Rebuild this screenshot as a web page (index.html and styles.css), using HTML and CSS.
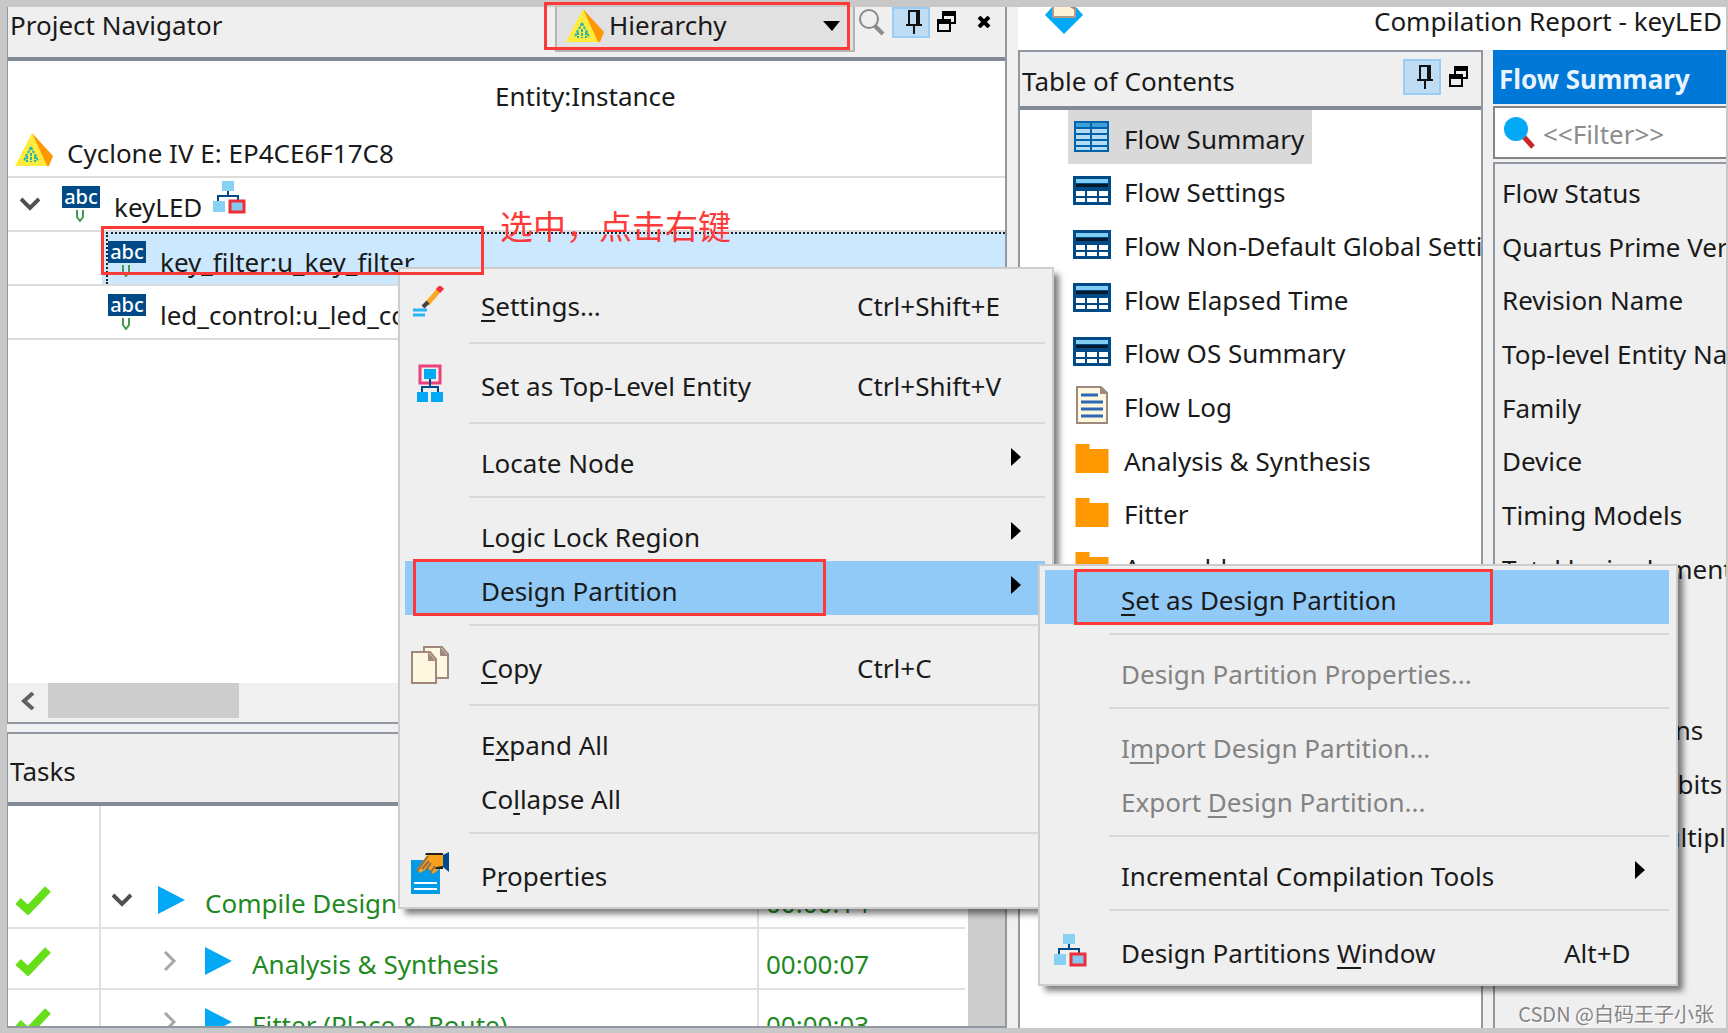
FILE: index.html
```html
<!DOCTYPE html>
<html lang="en">
<head>
<meta charset="utf-8">
<title>Quartus Prime - keyLED</title>
<link rel="stylesheet" href="styles.css">
</head>
<body>
<svg class="sprite" aria-hidden="true">
  <symbol id="pyramid" viewBox="0 0 38 34"><path d="M17 0 0 33h33z" fill="#ffeb3b"/><path d="M17 0 38 23 34 33h-2z" fill="#ff9800"/><path d="M16 14l-3 6M16 14l3 6M12 21l-3 7M20 21l3 7M16 20v9M12 23v6M20 23v6" stroke="#26b5b0" stroke-width="2" stroke-dasharray="3 1" fill="none"/></symbol>
  <symbol id="abc" viewBox="0 0 38 36"><path d="M0 0h38v22H0z" fill="#004a87"/><text x="19" y="18" text-anchor="middle" font-family="Noto Sans, sans-serif" font-size="20" font-weight="500" fill="#fff">abc</text><path d="M15 24v7l3 4 3-4v-7" stroke="#469a50" stroke-width="2" fill="none"/></symbol>
  <symbol id="hier" viewBox="0 0 33 33"><path d="M15 9v6M5 21v-6h20v5" stroke="#004a87" stroke-width="2" fill="none"/><path d="M9 0h12v10H9zM0 20h12v11H0z" fill="#87d1f3"/><path d="M17 20h14v11H17z" fill="#87c7ee" stroke="#ee2e38" stroke-width="3"/></symbol>
  <symbol id="down" viewBox="0 0 20 14"><path d="M1 2l9 9 9-9" stroke="#505050" stroke-width="4" fill="none"/></symbol>
  <symbol id="right" viewBox="0 0 14 20"><path d="M2 1l9 9-9 9" stroke="#a8a8a8" stroke-width="3" fill="none"/></symbol>
  <symbol id="pin" viewBox="0 0 16 24"><path d="M3 15V1h10v14M0 15h16M8 15v9" stroke="#111" stroke-width="2" fill="none"/><path d="M10 1h3v14h-3z" fill="#111"/></symbol>
  <symbol id="restore" viewBox="0 0 20 22"><path d="M6 8V2h12v10h-4" stroke="#000" stroke-width="2" fill="none"/><path d="M5 0h14v5H5zM0 8h14v5H0z"/><path d="M1 10h12v10H1z" stroke="#000" stroke-width="2" fill="none"/></symbol>
  <symbol id="grid" viewBox="0 0 36 32"><path d="M1 1h33v29H1z" fill="#b5dcf5"/><path d="M1 1h33v6H1z" fill="#3fa0dc"/><path d="M1 1h33v29H1zM17 1v29M1 7h33M1 13h33M1 19h33M1 25h33" stroke="#0062a8" stroke-width="2" fill="none"/></symbol>
  <symbol id="table" viewBox="0 0 38 29"><path d="M0 0h38v29H0z" fill="#004a87"/><path d="M3 3h32v4H3z" fill="#7fcdf0"/><path d="M3 8h32v3H3z" fill="#081a2a"/><path d="M3 15h9v5H3zM14 15h10v5H14zM26 15h9v5h-9zM3 22h9v4H3zM14 22h10v4H14zM26 22h9v4h-9z" fill="#fff"/></symbol>
  <symbol id="log" viewBox="0 0 32 38"><path d="M1 1h24l6 6v30H1z" fill="#fff8e1" stroke="#a1887f" stroke-width="2"/><path d="M24 1v7h7z" fill="#a1887f"/><path d="M5 9h17M5 16h22M5 23h22M5 30h22" stroke="#2f66b5" stroke-width="3"/></symbol>
  <symbol id="folder" viewBox="0 0 33 29"><path d="M0 0h14v5h19v24H0z" fill="#ff9800"/></symbol>
  <symbol id="check" viewBox="0 0 36 30"><path d="M3 16l10 9L33 4" stroke="#66df1b" stroke-width="8" fill="none"/></symbol>
  <symbol id="play" viewBox="0 0 27 28"><path d="M0 0l27 14L0 28z" fill="#03a9f4"/></symbol>
  <symbol id="arrow" viewBox="0 0 10 18"><path d="M0 0l10 9-10 9z"/></symbol>
</svg>

<div class="app">
  <div class="left">
    <section class="panel">
      <header class="bar nav-bar">
        <h2 class="label">Project Navigator</h2>
        <div class="combo">
          <svg class="combo-icon" width="38" height="34"><use href="#pyramid"/></svg>
          <select aria-label="Navigator view"><option>Hierarchy</option></select>
          <svg class="combo-arrow" width="17" height="10" viewBox="0 0 17 10"><path d="M0 0h17L9 10z"/></svg>
        </div>
        <div class="tools">
          <button class="tool" aria-label="Search"><svg width="26" height="27" viewBox="0 0 26 27" fill="none" stroke="#8a8a8a"><circle cx="10" cy="10" r="9" stroke-width="2"/><path d="M16 17l8 8" stroke-width="4"/></svg></button>
          <button class="tool pinned" aria-label="Pin"><svg width="16" height="24"><use href="#pin"/></svg></button>
          <button class="tool" aria-label="Restore"><svg width="20" height="22"><use href="#restore"/></svg></button>
          <button class="tool" aria-label="Close"><svg width="14" height="12" viewBox="0 0 14 12"><path d="M2 1l10 10M12 1L2 11" stroke="#000" stroke-width="4"/></svg></button>
        </div>
      </header>
      <div class="tree-head"><span class="label">Entity:Instance</span></div>
      <ul class="tree">
        <li class="tree-row device"><svg width="38" height="34"><use href="#pyramid"/></svg><span class="label">Cyclone IV E: EP4CE6F17C8</span></li>
        <li class="tree-row top"><svg class="twist" width="20" height="14"><use href="#down"/></svg><svg width="38" height="36"><use href="#abc"/></svg><span class="label">keyLED</span><svg class="badge" width="33" height="33"><use href="#hier"/></svg></li>
        <li class="tree-row child selected"><div class="cell"><svg width="38" height="36"><use href="#abc"/></svg><span class="label">key_filter:u_key_filter</span></div></li>
        <li class="tree-row child"><div class="cell"><svg width="38" height="36"><use href="#abc"/></svg><span class="label">led_control:u_led_control</span></div></li>
      </ul>
      <div class="hscroll"><svg width="15" height="18" viewBox="0 0 15 18"><path d="M13 1L4 9l9 8" stroke="#606060" stroke-width="4" fill="none"/></svg><div class="thumb"></div></div>
    </section>

    <section class="panel">
      <header class="bar tasks-bar"><h2 class="label">Tasks</h2></header>
      <div class="tasks-body">
        <table class="tasks">
          <colgroup><col class="c-state"><col><col class="c-time"></colgroup>
          <tr class="blank"><td></td><td></td><td></td></tr>
          <tr><td><svg width="36" height="30"><use href="#check"/></svg></td><td><div class="task"><svg class="open" width="20" height="14"><use href="#down"/></svg><svg width="27" height="28"><use href="#play"/></svg><span class="label">Compile Design</span></div></td><td><div class="task"><span class="label">00:00:14</span></div></td></tr>
          <tr><td><svg width="36" height="30"><use href="#check"/></svg></td><td><div class="task sub"><svg width="14" height="20"><use href="#right"/></svg><svg width="27" height="28"><use href="#play"/></svg><span class="label">Analysis &amp; Synthesis</span></div></td><td><div class="task"><span class="label">00:00:07</span></div></td></tr>
          <tr><td><svg width="36" height="30"><use href="#check"/></svg></td><td><div class="task sub"><svg width="14" height="20"><use href="#right"/></svg><svg width="27" height="28"><use href="#play"/></svg><span class="label">Fitter (Place &amp; Route)</span></div></td><td><div class="task"><span class="label">00:00:03</span></div></td></tr>
        </table>
        <div class="vscroll"></div>
      </div>
    </section>
  </div>

  <div class="right">
    <header class="title">
      <svg width="38" height="28" viewBox="0 0 38 28"><path d="M8 0h22l8 9-19 19L0 9z" fill="#03a9f4"/><path d="M8 0h22v11H8z" fill="#fff3d6" stroke="#b09a8c" stroke-width="2"/><path d="M23 0h7v4z" fill="#a1887f"/></svg>
      <h1>Compilation Report - keyLED</h1>
    </header>
    <div class="report">
      <section class="toc">
        <header class="bar toc-bar">
          <h2>Table of Contents</h2>
          <div class="tools">
            <button class="tool pinned" aria-label="Pin"><svg width="16" height="24"><use href="#pin"/></svg></button>
            <button class="tool" aria-label="Restore"><svg width="20" height="22"><use href="#restore"/></svg></button>
          </div>
        </header>
        <ul class="toc-list">
          <li><a href="#" class="current"><svg width="38" height="32"><use href="#grid"/></svg><span>Flow Summary</span></a></li>
          <li><a href="#"><svg width="38" height="29"><use href="#table"/></svg><span>Flow Settings</span></a></li>
          <li><a href="#"><svg width="38" height="29"><use href="#table"/></svg><span>Flow Non-Default Global Settings</span></a></li>
          <li><a href="#"><svg width="38" height="29"><use href="#table"/></svg><span>Flow Elapsed Time</span></a></li>
          <li><a href="#"><svg width="38" height="29"><use href="#table"/></svg><span>Flow OS Summary</span></a></li>
          <li><a href="#"><svg width="38" height="38"><use href="#log"/></svg><span>Flow Log</span></a></li>
          <li><a href="#"><svg width="38" height="29"><use href="#folder"/></svg><span>Analysis &amp; Synthesis</span></a></li>
          <li><a href="#"><svg width="38" height="29"><use href="#folder"/></svg><span>Fitter</span></a></li>
          <li><a href="#"><svg width="38" height="29"><use href="#folder"/></svg><span>Assembler</span></a></li>
        </ul>
      </section>
      <section class="summary">
        <h2 class="summary-title">Flow Summary</h2>
        <label class="filter">
          <svg width="31" height="32" viewBox="0 0 31 32"><path d="M20 20l9 10" stroke="#c62828" stroke-width="5"/><circle cx="12" cy="12" r="12" fill="#03a9f4"/></svg>
          <input type="text" placeholder="&lt;&lt;Filter&gt;&gt;" aria-label="Filter">
        </label>
        <div class="summary-body">
          <table class="facts">
            <tr><td>Flow Status</td></tr>
            <tr><td>Quartus Prime Version</td></tr>
            <tr><td>Revision Name</td></tr>
            <tr><td>Top-level Entity Name</td></tr>
            <tr><td>Family</td></tr>
            <tr><td>Device</td></tr>
            <tr><td>Timing Models</td></tr>
            <tr><td>Total logic elements</td></tr>
            <tr><td>Total registers</td></tr>
            <tr><td>Total pins</td></tr>
            <tr><td>Total virtual pins</td></tr>
            <tr><td>Total memory bits</td></tr>
            <tr><td>Embedded Multiplier 9-bit elements</td></tr>
            <tr><td>Total PLLs</td></tr>
          </table>
        </div>
      </section>
    </div>
  </div>
</div>

<div class="menu context" role="menu">
  <button class="item tall" role="menuitem"><span class="icon"><svg width="34" height="34" viewBox="0 0 34 34"><path d="M14 18L26 4" stroke="#f9a825" stroke-width="5"/><path d="M25 5l4-4" stroke="#f03040" stroke-width="6"/><path d="M10 21l5-5" stroke="#424242" stroke-width="4"/><path d="M0 24h14M0 29h12" stroke="#29b6f6" stroke-width="3"/></svg></span><span class="label"><u>S</u>ettings...</span><kbd>Ctrl+Shift+E</kbd></button>
  <hr>
  <button class="item tall" role="menuitem"><span class="icon"><svg width="28" height="38" viewBox="0 0 28 38"><path d="M4 2h20v17H4z" fill="none" stroke="#ec407a" stroke-width="3"/><path d="M14 12v12M6 30v-7h16v7" stroke="#004a87" stroke-width="2" fill="none"/><path d="M8 5h12v10H8zM1 28h11v10H1zM15 28h12v10H15z" fill="#03a9f4"/></svg></span><span class="label">Set as Top-Level Entity</span><kbd>Ctrl+Shift+V</kbd></button>
  <hr>
  <button class="item" role="menuitem"><span class="icon"></span><span class="label">Locate Node</span><svg class="more" width="10" height="18"><use href="#arrow"/></svg></button>
  <hr>
  <button class="item" role="menuitem"><span class="icon"></span><span class="label">Logic Lock Region</span><svg class="more" width="10" height="18"><use href="#arrow"/></svg></button>
  <button class="item active" role="menuitem"><span class="icon"></span><span class="label">Design Partition</span><svg class="more" width="10" height="18"><use href="#arrow"/></svg></button>
  <hr>
  <button class="item tall" role="menuitem"><span class="icon"><svg width="38" height="38" viewBox="0 0 38 38"><path d="M13 1h18l6 7v24H13z" fill="#fff8e1" stroke="#a1887f" stroke-width="2"/><path d="M29 1v9h8z" fill="#a1887f"/><path d="M1 6h18l6 7v24H1z" fill="#fff8e1" stroke="#a1887f" stroke-width="2"/><path d="M17 6v9h8z" fill="#a1887f"/></svg></span><span class="label"><u>C</u>opy</span><kbd>Ctrl+C</kbd></button>
  <hr>
  <button class="item" role="menuitem"><span class="icon"></span><span class="label">E<u>x</u>pand All</span></button>
  <button class="item" role="menuitem"><span class="icon"></span><span class="label">Co<u>l</u>lapse All</span></button>
  <hr>
  <button class="item tall" role="menuitem"><span class="icon"><svg width="38" height="42" viewBox="0 0 38 42"><path d="M0 8h29v34H0z" fill="#039be5"/><path d="M3 31h23M3 37h23" stroke="#fff" stroke-width="2"/><path d="M6 17L17 2h15v12l-10 8-5-6-8 5z" fill="#f9a11b"/><path d="M6 19L17 4M11 17l7-8M15 18l5-7M19 21l5-7" stroke="#8d6e4f" stroke-width="2" fill="none"/><path d="M15 1h17v2H14zM25 15l7-1v3h-8z" fill="#222"/><path d="M38 0v20l-6-5V3z" fill="#004a87"/></svg></span><span class="label">P<u>r</u>operties</span></button>
</div>

<div class="menu submenu" role="menu">
  <button class="item active" role="menuitem"><span class="icon"></span><span class="label"><u>S</u>et as Design Partition</span></button>
  <hr>
  <button class="item" role="menuitem" disabled><span class="icon"></span><span class="label">Design Partition Properties...</span></button>
  <hr>
  <button class="item" role="menuitem" disabled><span class="icon"></span><span class="label">I<u>m</u>port Design Partition...</span></button>
  <button class="item" role="menuitem" disabled><span class="icon"></span><span class="label">Export <u>D</u>esign Partition...</span></button>
  <hr>
  <button class="item" role="menuitem"><span class="icon"></span><span class="label">Incremental Compilation Tools</span><svg class="more" width="10" height="18"><use href="#arrow"/></svg></button>
  <hr>
  <button class="item tall" role="menuitem"><span class="icon"><svg width="33" height="33"><use href="#hier"/></svg></span><span class="label">Design Partitions <u>W</u>indow</span><kbd>Alt+D</kbd></button>
</div>

<div class="mark mark-view"></div>
<div class="mark mark-entity"></div>
<div class="mark mark-partition"></div>
<div class="mark mark-set"></div>
<p class="note">选中，点击右键</p>
<p class="watermark">CSDN @白码王子小张</p>
</body>
</html>
```
FILE: styles.css
```css
* { box-sizing: border-box; }

body {
  position: relative;
  height: 100vh;
  margin: 0;
  overflow: hidden;
  background: #c8c8c8;
  color: #1a1a1a;
  font-family: "Noto Sans", "Open Sans", sans-serif;
  font-size: 26px;
  line-height: 35px;
  white-space: nowrap;
}

h1, h2, p, ul { margin: 0; padding: 0; font-size: 26px; font-weight: 400; list-style: none; }
svg { display: block; flex: none; }
.sprite { position: absolute; width: 0; height: 0; }
button, input, select { border: 0; padding: 0; background: none; color: inherit; font: inherit; }
.label { padding-top: 7px; }

.app {
  display: grid;
  grid-template-columns: minmax(0, 1000fr) minmax(0, 708fr);
  gap: 11px;
  height: 100vh;
  padding: 0;
  border: solid #c8c8c8;
  border-width: 7px 2px 5px 7px;
  background: #f0f0f0;
}

/* left column */
.left {
  display: grid;
  grid-template-rows: minmax(0, 717fr) minmax(0, 296fr);
  grid-template-columns: minmax(0, 1fr);
  gap: 8px;
  min-height: 0;
}
.panel {
  display: flex;
  flex-direction: column;
  overflow: hidden;
  border: 2px solid #9298a2;
  border-left-width: 1px;
  background: #fff;
}
.panel:first-child { border-top: 0; }

.bar {
  display: flex;
  align-items: center;
  flex: none;
  border-bottom: 4px solid #828a94;
  background: #efefef;
}
.nav-bar { height: 54px; padding: 0 14px 0 2px; align-items: flex-start; }
.nav-bar h2 { padding-top: 1px; }
.tasks-bar { height: 72px; padding-left: 2px; }
.toc-bar { height: 58px; padding: 0 12px 0 2px; }
.toc-bar h2 { padding-top: 4px; }

.combo {
  display: grid;
  grid-template-columns: 1fr;
  align-items: center;
  width: 300px;
  height: 45px;
  margin-left: auto;
  padding-bottom: 8px;
  border: solid #b4b4b4;
  border-width: 0 2px 2px;
  background: #e1e1e1;
}
.combo > * { grid-area: 1 / 1; }
.combo-icon { margin-left: 9px; }
.combo-arrow { justify-self: end; margin-right: 13px; }
.combo select { width: 100%; height: 37px; padding-left: 52px; appearance: none; }

.tools { display: flex; align-items: center; gap: 8px; height: 34px; margin-left: auto; }
.combo + .tools { gap: 7px; height: 30px; margin-left: 4px; }
.nav-bar .tools .tool:last-child { margin-left: 13px; }
.tool { display: flex; align-items: center; justify-content: center; }
.pinned { width: 38px; height: 36px; padding-left: 6px; border: 2px solid #99cdf5; background: #bedcf4; }
.nav-bar .pinned { height: 31px; }

.tree-head { display: flex; align-items: center; height: 63px; padding-left: 487px; }
.tree { flex: 1; }
.tree-row {
  display: flex;
  align-items: center;
  height: 54px;
  border-bottom: 2px solid #dcdcdc;
}
.device { padding-left: 7px; gap: 14px; }
.top { padding-left: 12px; }
.twist { margin-right: 22px; }
.top .label { margin: 0 11px 0 14px; }
.badge { margin-bottom: 14px; }
.child { padding-left: 94px; }
.cell { display: flex; flex: 1; align-items: center; align-self: stretch; gap: 14px; padding-left: 6px; }
.selected .cell { padding-left: 0; border: dotted #222; border-width: 2px 0 0 2px; box-shadow: -4px 0 #cce8ff; margin-left: 4px; background: #cce8ff; }

.hscroll { display: flex; align-items: flex-start; height: 39px; padding: 0 12px; background: #f0f0f0; }
.hscroll svg { margin-top: 9px; }
.thumb { width: 191px; height: 35px; margin-left: 13px; background: #cdcdcd; }

.tasks-body { display: flex; flex: 1; min-height: 0; overflow: hidden; }
.tasks { flex: 1; border-collapse: collapse; table-layout: fixed; color: #1f8a1f; }
.c-state { width: 92px; }
.c-time { width: 207px; }
.tasks td { height: 61px; padding: 5px 0 0 7px; border: 2px solid #e0e0e0; border-width: 0 0 2px 2px; }
.tasks td:first-child { border-left: 0; }
.tasks .blank td { border-bottom: 0; }
.task { display: flex; align-items: center; }
.task svg + svg { margin: 0 20px 0 26px; }
.open { margin-left: 4px; }
.sub { padding-left: 55px; }
.sub svg + svg { margin-left: 28px; }
.vscroll { width: 37px; margin-left: 3px; background: #cdcdcd; }

/* right column */
.right { display: flex; flex-direction: column; min-width: 0; min-height: 0; background: #fff; }
.title { display: flex; align-items: flex-start; justify-content: space-between; height: 43px; padding: 0 4px 0 27px; overflow: hidden; }
.title svg { margin-top: -1px; }
.title h1 { flex: none; margin-top: -3px; }
.report {
  display: grid;
  grid-template-columns: minmax(0, 465fr) minmax(0, 233fr);
  gap: 10px;
  flex: 1;
  min-height: 0;
  background: #f0f0f0;
}
.toc { overflow: hidden; border: 2px solid #9298a2; border-bottom: 0; background: #fff; }
.toc .tools { align-self: flex-start; margin-top: 8px; }
.toc-list { display: grid; grid-auto-rows: 1fr; height: 483px; padding-left: 48px; }
.toc-list li { display: flex; }
.toc-list a {
  display: flex;
  align-items: center;
  gap: 13px;
  padding: 0 8px 0 5px;
  color: inherit;
  text-decoration: none;
}
.toc-list span { padding-top: 5px; }
.current { background: #d9d9d9; }

.summary { display: flex; flex-direction: column; min-width: 0; overflow: hidden; }
.summary-title { height: 54px; padding: 12px 6px 0; background: #0078d7; color: #e8f4ff; font-weight: 700; }
.filter { display: flex; align-items: center; gap: 8px; height: 53px; margin: 2px 0 3px; padding-left: 9px; border: 2px solid #858585; border-right: 0; background: #fff; }
.filter input { flex: 1; min-width: 0; padding-top: 4px; }
.filter input::placeholder { color: #8c8c8c; opacity: 1; }
.summary-body { flex: 1; min-height: 0; overflow: hidden; border: 2px solid #9298a2; border-width: 2px 0 0 2px; background: #efefef; }
.facts { height: 752px; border-collapse: collapse; }
.facts td { padding: 5px 0 0 7px; }

/* menus */
.menu {
  position: absolute;
  display: flex;
  flex-direction: column;
  padding: 4px 7px 4px 5px;
  border: 2px solid #cdcdcd;
  background: #efefef;
  box-shadow: 6px 6px 6px -1px rgba(0, 0, 0, .5);
}
.context { left: 398px; top: 267px; width: 656px; }
.submenu { left: 1038px; top: 564px; width: 640px; }
.menu hr { width: calc(100% - 64px); height: 2px; margin: 9px 0 9px 64px; border: 0; background: #d9d9d9; }
.item { display: flex; align-items: center; height: 54px; padding-right: 24px; text-align: left; }
.item.tall { height: 60px; }
.item.active { background: #91c9f7; }
.item:disabled { color: #838383; }
.item .label { flex: 1; }
.item u { text-underline-offset: 4px; text-decoration-thickness: 2px; text-decoration-skip-ink: none; }
.icon { display: flex; justify-content: center; width: 50px; margin-right: 26px; }
.more { margin-bottom: 6px; }
kbd { width: 164px; padding-top: 7px; font: inherit; }
.submenu kbd { width: 81px; }

/* annotations drawn over the window */
.mark { position: absolute; border: 3px solid #fe3a39; }
.mark-view { left: 544px; top: 2px; width: 306px; height: 48px; }
.mark-entity { left: 101px; top: 226px; width: 383px; height: 49px; }
.mark-partition { left: 413px; top: 559px; width: 413px; height: 57px; }
.mark-set { left: 1074px; top: 569px; width: 419px; height: 56px; }
.note { position: absolute; left: 500px; top: 201px; color: #fe3a39; font-family: "Noto Sans CJK SC", sans-serif; font-size: 33px; line-height: 48px; }
.watermark { position: absolute; right: 14px; bottom: 4px; color: #858585; font-family: "Noto Sans CJK SC", sans-serif; font-size: 20px; line-height: 30px; text-shadow: 1px 1px #fff; }
```
